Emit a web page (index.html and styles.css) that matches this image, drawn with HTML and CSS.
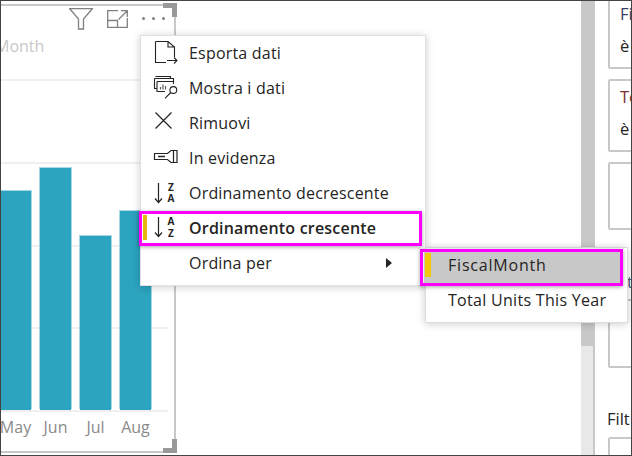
FILE: index.html
```html
<!DOCTYPE html>
<html lang="it">
<head>
  <meta charset="UTF-8">
  <meta name="viewport" content="width=device-width, initial-scale=1.0">
  <title>Ordinamento del grafico</title>
  <link rel="stylesheet" href="styles.css">
</head>
<body>
  <div class="screen">
    <!-- Visual con il grafico a barre -->
    <section class="visual">
      <div class="visual-header">
        <svg width="24" height="22" viewBox="0 0 24 22"><path d="M.7 .7H23.300L14.500 11V21H9.500V11Z" fill="none" stroke="#808080" stroke-width="1.300"/></svg>
        <svg width="21" height="18" viewBox="0 0 21 18"><path d="M11 .7H.7V17.300H20.300V8M.7 10.500H10.500V17.300M14 .7H20.300V7M20 1L11.500 9.500" fill="none" stroke="#808080" stroke-width="1.300"/></svg>
        <div class="dots"><span></span><span></span><span></span></div>
      </div>
      <div class="chart-title">Month</div>
      <div class="chart">
        <div class="bar-col"><div class="bar bar-may"></div><span class="bar-label">May</span></div>
        <div class="bar-col"><div class="bar bar-jun"></div><span class="bar-label">Jun</span></div>
        <div class="bar-col"><div class="bar bar-jul"></div><span class="bar-label">Jul</span></div>
        <div class="bar-col"><div class="bar bar-aug"></div><span class="bar-label">Aug</span></div>
      </div>
      <span class="handle handle-top"></span>
      <span class="handle handle-bottom"></span>
    </section>

    <div class="scrollbar"><div class="scroll-thumb"></div></div>

    <!-- Colonna delle schede a destra -->
    <aside class="side">
      <div class="card card-one"><span class="card-title title-f">Fi</span><span class="card-text">è</span></div>
      <div class="card card-two"><span class="card-title title-t">To</span><span class="card-text">è</span></div>
      <div class="card card-three"></div>
      <div class="side-note">t</div>
      <div class="card card-four"></div>
      <div class="side-label">Filt</div>
      <div class="card card-five"></div>
    </aside>

    <!-- Menu contestuale -->
    <ul class="menu">
      <li class="menu-item">
        <svg class="menu-icon" width="26" height="26" viewBox="0 0 26 26"><path d="M3.500 1.500H16L22.500 7V17M16 1.500V7H22.500M3.500 1.500V22.500H14M15 20.500H25M22 17.500L25 20.500L22 23.500" fill="none" stroke="#252423" stroke-width="1.100"/></svg>
        Esporta dati
      </li>
      <li class="menu-item">
        <svg class="menu-icon" width="26" height="26" viewBox="0 0 26 26"><path d="M3.500 1.500H18.500V3.500M2.500 3.500H21.500V9M2.500 3.500V13.500H5M5 6.500H22M5 6.500V16.500H13" fill="none" stroke="#252423" stroke-width="1.100"/><path d="M8.500 14.500V12M11 14.500V9.500M13.500 14.500V11" fill="none" stroke="#605e5c" stroke-width="1.200"/><circle cx="21.300" cy="15" r="3.400" fill="#fff" stroke="#252423" stroke-width="1.100"/><path d="M18.800 17.500L13 23.300" stroke="#252423" stroke-width="1.100"/></svg>
        Mostra i dati
      </li>
      <li class="menu-item">
        <svg class="menu-icon" width="26" height="26" viewBox="0 0 26 26"><path d="M3.500 2.500L19.500 18.500M19.500 2.500L3.500 18.500" fill="none" stroke="#252423" stroke-width="1.200"/></svg>
        Rimuovi
      </li>
      <li class="menu-item">
        <svg class="menu-icon" width="26" height="26" viewBox="0 0 26 26"><path d="M2.500 8.500H15.500L19 5.500H25V17.500H19L15.500 14.500H2.500ZM21.500 5.500V17.500" fill="none" stroke="#252423" stroke-width="1.200"/><path d="M6 11.500H13" stroke="#252423" stroke-width="1.500"/></svg>
        In evidenza
      </li>
      <li class="menu-item">
        <svg class="menu-icon" width="26" height="26" viewBox="0 0 26 26"><path d="M6.500 3V22.500M3 18.500L6.500 22.500L10 18.500" fill="none" stroke="#252423" stroke-width="1.200"/><text class="az-letter" x="19" y="10.500">Z</text><text class="az-letter" x="19" y="21.500">A</text></svg>
        Ordinamento decrescente
      </li>
      <li class="menu-item menu-item-active">
        <span class="marker"></span>
        <svg class="menu-icon" width="26" height="26" viewBox="0 0 26 26"><path d="M6.500 2V21.500M3 17.500L6.500 21.500L10 17.500" fill="none" stroke="#252423" stroke-width="1.200"/><text class="az-letter" x="19" y="9.500">A</text><text class="az-letter" x="19" y="21.500">Z</text></svg>
        Ordinamento crescente
      </li>
      <li class="menu-item">
        <span class="menu-icon"></span>
        Ordina per
        <span class="arrow"></span>
      </li>
    </ul>
    <div class="outline outline-menu"></div>

    <!-- Sottomenu Ordina per -->
    <ul class="submenu">
      <li class="submenu-item submenu-item-active"><span class="marker marker-sub"></span>FiscalMonth</li>
      <li class="submenu-item">Total Units This Year</li>
    </ul>
    <div class="outline outline-sub"></div>
  </div>
</body>
</html>
```

FILE: styles.css
```css
* {
  box-sizing: border-box;
}

body {
  margin: 0;
  font-family: "Open Sans", "Liberation Sans", sans-serif;
  color: #252423;
  background-color: #fff;
}

ul {
  list-style: none;
  margin: 0;
  padding: 0;
}

.screen {
  position: relative;
  display: flex;
  width: 632px;
  height: 456px;
  overflow: hidden;
  border: 1px solid #444;
}

/* Visual */
.visual {
  position: relative;
  flex: none;
  display: flex;
  flex-direction: column;
  width: 175px;
  height: 449px;
  margin-top: 3px;
  border-top: 2px solid #c8c8c8;
  border-right: 2px solid #c8c8c8;
  border-bottom: 2px solid #c8c8c8;
}

.visual-header {
  display: flex;
  align-items: center;
  justify-content: flex-end;
  gap: 14px;
  height: 27px;
  padding: 0 9px 2px 0;
}

.dots {
  display: flex;
  gap: 7px;
}

.dots span {
  width: 3px;
  height: 3px;
  border-radius: 50%;
  background-color: #808080;
}

.chart-title {
  height: 46px;
  margin-left: -6px;
  padding-top: 2px;
  font-size: 16px;
  color: #c8c8c8;
}

.chart {
  display: flex;
  align-items: flex-end;
  gap: 9px;
  height: 372px;
  margin: 0 6px 0 -1px;
  background-image: repeating-linear-gradient(#efefef 0 2px, transparent 2px 82.800px);
}

.bar-col {
  display: flex;
  flex-direction: column;
  align-items: center;
  flex: none;
  width: 31px;
}

.bar {
  width: 31px;
  background-color: #2ca3bf;
  box-shadow: 1px -1px 0 #a5d8e4, -1px -1px 0 #a5d8e4;
}

.bar-may { height: 219px; }
.bar-jun { height: 242px; }
.bar-jul { height: 174px; }
.bar-aug { height: 199px; }

.bar-label {
  height: 41px;
  padding-top: 6px;
  font-size: 16px;
  color: #8a8a8a;
}

.handle {
  position: absolute;
  right: -3px;
  width: 14px;
  height: 14px;
  border-right: 5px solid #999;
}

.handle-top {
  top: -3px;
  border-top: 5px solid #999;
}

.handle-bottom {
  bottom: -2px;
  border-bottom: 5px solid #999;
}

/* Barra di scorrimento */
.scrollbar {
  flex: none;
  width: 14px;
  height: 100%;
  margin-left: 405px;
  background-color: #e8e8e8;
  border-right: 2px solid #c8c8c8;
}

.scroll-thumb {
  width: 14px;
  height: 345px;
  background-color: #c8c8c8;
}

/* Schede a destra */
.side {
  flex: none;
  display: flex;
  flex-direction: column;
  width: 23px;
  margin-left: 13px;
}

.card {
  flex: none;
  display: flex;
  flex-direction: column;
  align-items: flex-start;
  width: 40px;
  padding-left: 10px;
  border: 2px solid #c8c8c8;
  border-radius: 2px;
  font-size: 16.500px;
}

.card-one { height: 71px; margin-top: -3px; }
.card-two { height: 73px; margin-top: 10px; padding-top: 2px; }
.card-three { height: 68px; margin-top: 10px; }
.card-four { height: 69px; }
.card-five { height: 40px; }

.card-title { line-height: 28px; }
.title-f { color: #3a4266; }
.title-t { color: #7a2f2f; }
.card-text { margin-top: 6px; line-height: 24px; }

.side-note {
  flex: none;
  height: 69px;
  padding: 41px 0 0 19px;
  font-size: 16px;
  line-height: 22px;
  color: #4a5a7a;
}

.side-label {
  flex: none;
  height: 69px;
  margin-left: -1px;
  padding-top: 40px;
  font-size: 16.500px;
  line-height: 22px;
}

/* Menu contestuale */
.menu {
  position: absolute;
  left: 139px;
  top: 34px;
  width: 286px;
  height: 251px;
  background-color: #fff;
  border: 1px solid #e1e1e1;
  box-shadow: 0 1px 8px rgba(0, 0, 0, 0.2);
}

.menu-item {
  position: relative;
  display: flex;
  align-items: center;
  gap: 11px;
  height: 35px;
  padding: 0 0 2px 11px;
  font-size: 16px;
  letter-spacing: 0.2px;
  white-space: nowrap;
}

.menu-icon {
  flex: none;
  width: 26px;
  height: 26px;
  margin-top: 1px;
}

.az-letter {
  font-size: 10px;
  font-weight: 700;
  letter-spacing: 0;
  text-anchor: middle;
  fill: #252423;
}

.menu-item-active {
  font-weight: 600;
}

.marker {
  position: absolute;
  left: 2px;
  top: 4px;
  width: 4px;
  height: 25px;
  background-color: #e6b80f;
}

.arrow {
  position: absolute;
  left: 245px;
  top: 12px;
  border-top: 5px solid transparent;
  border-bottom: 5px solid transparent;
  border-left: 6px solid #252423;
}

/* Sottomenu */
.submenu {
  position: absolute;
  left: 424px;
  top: 246px;
  width: 203px;
  height: 76px;
  padding: 1px 0;
  background-color: #fff;
  border: 1px solid #dcdcdc;
  box-shadow: 0 1px 8px rgba(0, 0, 0, 0.2);
}

.submenu-item {
  position: relative;
  display: flex;
  align-items: center;
  height: 35px;
  padding: 0 0 4px 22px;
  font-size: 16px;
  letter-spacing: 0.3px;
  white-space: nowrap;
}

.submenu-item-active {
  margin: 0 5px 0 -2px;
  padding-left: 24px;
  font-weight: 500;
  letter-spacing: 0.8px;
  background-color: #c8c8c8;
}

.marker-sub {
  left: 1px;
  top: 4px;
  width: 6px;
  height: 24px;
  background-color: #f2c80f;
}

/* Riquadri magenta */
.outline {
  position: absolute;
  border: 3px solid #f0f;
  box-shadow: 0 1px 4px rgba(0, 0, 0, 0.35);
}

.outline-menu {
  left: 138px;
  top: 210px;
  width: 283px;
  height: 35px;
}

.outline-sub {
  left: 419px;
  top: 248px;
  width: 203px;
  height: 37px;
}
```
